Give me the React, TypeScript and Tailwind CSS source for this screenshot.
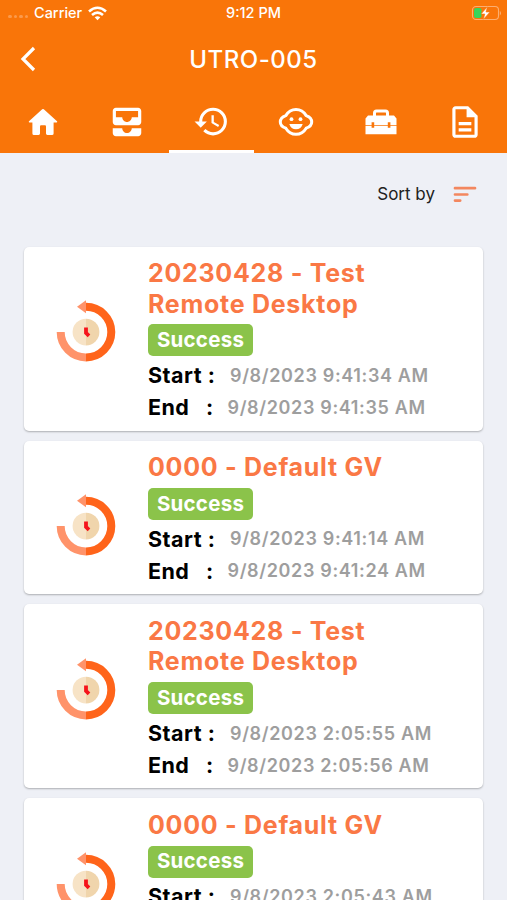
import type { ReactNode } from "react";
import { MdAllInbox, MdHistory, MdOutlineDescription } from "react-icons/md";

type Job = { title: string[]; start: string; end: string };

const jobs: Job[] = [
  { title: ["20230428 - Test", "Remote Desktop"], start: "9/8/2023 9:41:34 AM", end: "9/8/2023 9:41:35 AM" },
  { title: ["0000 - Default GV"], start: "9/8/2023 9:41:14 AM", end: "9/8/2023 9:41:24 AM" },
  { title: ["20230428 - Test", "Remote Desktop"], start: "9/8/2023 2:05:55 AM", end: "9/8/2023 2:05:56 AM" },
  { title: ["0000 - Default GV"], start: "9/8/2023 2:05:43 AM", end: "9/8/2023 2:05:53 AM" },
];

function HomeIcon() {
  return (
    <svg width="30" height="28" viewBox="0 0 30 28" fill="currentColor">
      <path d="M14.2 1.2Q15 .6 15.8 1.2L29 13.2Q29.8 14.3 28.6 14.5H25.6V25.4Q25.6 27 24 27H19.4Q18 27 18 25.6V18.4Q18 17.3 17 17.3H13Q12 17.3 12 18.4V25.6Q12 27 10.6 27H6Q4.4 27 4.4 25.4V14.5H1.4Q.2 14.3 1 13.2Z" />
    </svg>
  );
}

function FaceIcon() {
  return (
    <svg width="36" height="30" viewBox="0 0 36 30" fill="none">
      <path
        d="M18 2.5C22.6 2.5 26 5 28.2 8.6C31 9.6 33.7 12 33.7 15C33.7 18 31 20.2 28.2 21.2C26 24.8 22.6 27.3 18 27.3C13.4 27.3 10 24.8 7.8 21.2C5 20.2 2.3 18 2.3 15C2.3 12 5 9.6 7.8 8.6C10 5 13.4 2.5 18 2.5Z"
        stroke="currentColor"
        strokeWidth="3"
      />
      <circle cx="13.5" cy="12.2" r="1.9" fill="currentColor" />
      <circle cx="22.5" cy="12.2" r="1.9" fill="currentColor" />
      <path d="M11.3 17H24.7C23.8 20.3 21.3 22.3 18 22.3S12.2 20.3 11.3 17Z" fill="currentColor" />
    </svg>
  );
}

function ToolboxIcon() {
  return (
    <svg width="32" height="26" viewBox="0 0 32 26" fill="currentColor">
      <path d="M9.5 8V4Q9.5 2 11.5 2H20.5Q22.5 2 22.5 4V8" fill="none" stroke="currentColor" strokeWidth="3" />
      <path d="M3 6.5H29L31.5 9.5V16H25.4V13.2H22.8V16H9.2V13.2H6.6V16H.5V9.5Z" />
      <path d="M.5 16.8H6.6V18.8H9.2V16.8H22.8V18.8H25.4V16.8H31.5V25.3H.5Z" />
    </svg>
  );
}

function ClockArrowIcon() {
  return (
    <svg width="60" height="62" viewBox="0 0 60 62">
      <path d="M30 6.8A25.3 25.3 0 0 1 30 57.4" fill="none" stroke="#ff641a" strokeWidth="8" />
      <path d="M4.7 32.1A25.3 25.3 0 0 0 30 57.4" fill="none" stroke="#ff936a" strokeWidth="8" />
      <path d="M21 6.8L30 .3V13.2Z" fill="#ff936a" />
      <path d="M30 18.7A13.4 13.4 0 0 0 30 45.5Z" fill="#f7e3c6" />
      <path d="M30 18.7A13.4 13.4 0 0 1 30 45.5Z" fill="#f0d5ac" />
      <path d="M30 27.4V33L33 35.8" fill="none" stroke="#f5131b" strokeWidth="3.8" />
    </svg>
  );
}

function Tab({ active, children }: { active?: boolean; children: ReactNode }) {
  return (
    <div className={`flex h-[64px] flex-1 items-center justify-center border-b-[3px] pt-[5px] pl-px ${active ? "border-white" : "border-transparent"}`}>
      {children}
    </div>
  );
}

function JobCard({ job }: { job: Job }) {
  return (
    <article className="flex shrink-0 items-start rounded-[5px] bg-white pt-[11.5px] pb-[7.1px] shadow-[0_1px_2px_rgba(0,0,0,0.28)]">
      <div className="flex w-[124px] shrink-0 justify-center pt-[42px]">
        <ClockArrowIcon />
      </div>
      <div>
        <h2 className="text-[25px] leading-[30.6px] font-bold tracking-[0.72px] text-[#fa7845]">
          {job.title.map((line) => (
            <span key={line} className="block whitespace-nowrap">{line}</span>
          ))}
        </h2>
        <div className="mt-[5.3px] flex h-[32px] w-[105px] items-center justify-center rounded-[5px] bg-[#8bc34a] text-[20.5px] font-bold tracking-[0.25px] text-white">
          Success
        </div>
        <div className="mt-[3px] flex h-[32px] items-center">
          <span className="w-[82px] text-[21.5px] font-bold tracking-[0.5px] whitespace-pre text-black">Start :</span>
          <span className="text-[18px] font-semibold tracking-[0.64px] text-[#9e9e9e]">{job.start}</span>
        </div>
        <div className="flex h-[32px] items-center">
          <span className="w-[58px] text-[21.5px] font-bold tracking-[0.4px] text-black">End</span>
          <span className="w-[21.5px] text-[21.5px] font-bold text-black">:</span>
          <span className="text-[18px] font-semibold tracking-[0.64px] text-[#9e9e9e]">{job.end}</span>
        </div>
      </div>
    </article>
  );
}

export default function App() {
  return (
    <main className="flex h-[900px] w-[507px] flex-col overflow-hidden bg-[#eef0f6] font-['Inter',sans-serif]">
      <header className="flex h-[152.5px] shrink-0 flex-col bg-[#f97509] text-white">
        <div className="grid h-[26px] grid-cols-3 items-center px-2 text-[14.5px] font-medium">
          <div className="flex items-center">
            <div className="mt-[7px] mr-[6px] flex gap-[2px]">
              {[0, 1, 2, 3].map((dot) => (
                <i key={dot} className="size-[3.5px] rounded-full bg-[#fb9a4c]" />
              ))}
            </div>
            <span>Carrier</span>
            <svg className="ml-[6px]" width="19" height="15" viewBox="0 0 19 15" fill="none" stroke="currentColor" strokeWidth="2.6">
              <path d="M1 5.5Q9.5-2 18 5.5M4 9Q9.5 4.2 15 9" />
              <path d="M6.7 11.3Q9.5 9 12.3 11.3L9.5 14.2Z" fill="currentColor" stroke="none" />
            </svg>
          </div>
          <div className="text-center">9:12 PM</div>
          <svg className="-mr-[2px] justify-self-end" width="30" height="16" viewBox="0 0 30 16">
            <rect x="1.5" y="1.5" width="26" height="13" rx="3.5" fill="none" stroke="#fcae70" strokeWidth="1.1" />
            <path d="M28.8 6V10.5Q30 9.8 30 8.2T28.8 6Z" fill="#fcae70" />
            <rect x="3" y="3" width="7.5" height="10" rx="2" fill="#37d45a" />
            <path d="M16.4 1.8L10 9H13.8L12.3 14.4L19 7H15Z" fill="#fff" stroke="#f97509" strokeWidth=".6" />
          </svg>
        </div>
        <div className="grid h-[62.5px] grid-cols-[1fr_auto_1fr] items-center pt-[4px]">
          <svg className="ml-[20px]" width="16" height="26" viewBox="0 0 16 26" fill="none" stroke="currentColor" strokeWidth="3.2">
            <path d="M14 2L3 13L14 24" />
          </svg>
          <h1 className="pt-[2px] text-[24px] font-medium tracking-[0.5px]">UTRO-005</h1>
        </div>
        <nav className="flex">
          <Tab><HomeIcon /></Tab>
          <Tab><MdAllInbox size={38} /></Tab>
          <Tab active><MdHistory size={37} /></Tab>
          <Tab><FaceIcon /></Tab>
          <Tab><ToolboxIcon /></Tab>
          <Tab><MdOutlineDescription size={38} /></Tab>
        </nav>
      </header>
      <div className="flex h-[94px] shrink-0 items-start justify-end pt-[29px] pr-[30px]">
        <span className="text-[17px] leading-[24px] text-[#212121]">Sort by</span>
        <svg className="mt-[4px] ml-[18px]" width="24" height="17" viewBox="0 0 24 17" fill="none" stroke="#f3875f" strokeWidth="2.7" strokeLinecap="round">
          <path d="M2 2.2H22M2 8.5H14.3M2 14.6H7.2" />
        </svg>
      </div>
      <section className="flex flex-col gap-[10px] px-[24px]">
        {jobs.map((job, index) => (
          <JobCard key={index} job={job} />
        ))}
      </section>
    </main>
  );
}
